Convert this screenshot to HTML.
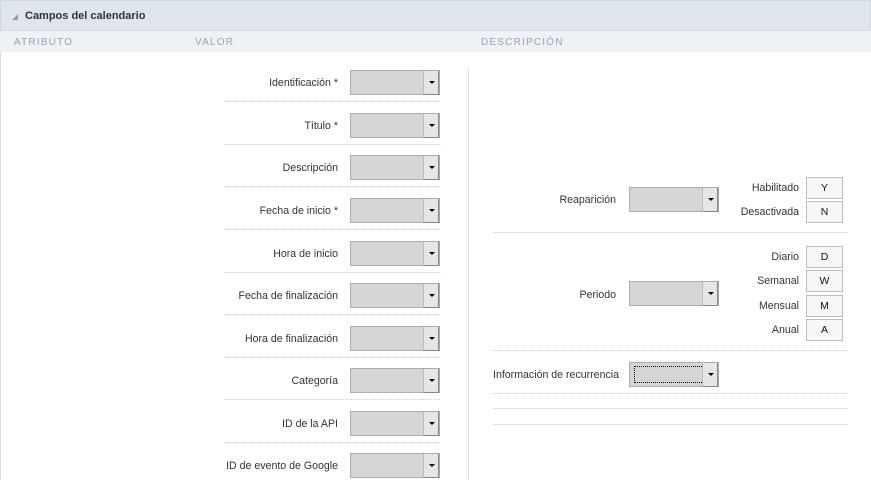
<!DOCTYPE html>
<html><head><meta charset="utf-8"><style>
*{margin:0;padding:0;box-sizing:border-box}
body{width:871px;height:480px;background:#fff;font-family:"Liberation Sans",Arial,sans-serif;font-size:10.6px;color:#333;position:relative;overflow:hidden}
.abs{position:absolute}
.hdr{left:0;top:0;width:871px;height:31px;background:#dfe5ec;border:1px solid #cfd6de;border-bottom:1px solid #d6dde5}
.hdr span{position:absolute;left:24px;top:9px;font-weight:bold;color:#333;font-size:11px}
.tri{left:11px;top:13px;width:0;height:0;border-left:6px solid transparent;border-bottom:6px solid #999}
.colh{left:0;top:31px;width:871px;height:21px;background:#eef2f5;color:#8fa3b8;font-size:10px;letter-spacing:1.2px}
.colh span{position:absolute;top:6px}
.lb{position:absolute;text-align:right;white-space:nowrap}
.sel{position:absolute;width:90px;height:25px;background:#d5d5d5;border:1px solid #a8adb3}
.sel:after{content:"";position:absolute;right:0;top:0;width:14px;height:23px;background:#e6e6e6;border-left:1px solid #bbb;border-right:1px solid #888;border-bottom:1px solid #888}
.sel:before{content:"";position:absolute;right:4px;top:10px;border-left:3px solid transparent;border-right:3px solid transparent;border-top:3px solid #000;z-index:2}
.sep{position:absolute;height:0;border-top:1px dotted #b8cfe0}
.box{position:absolute;left:806px;width:37px;height:22px;border:1px solid #bbb;background:#f7f7f7;text-align:center;line-height:20px;font-size:10.5px;color:#111}
.leftbd{left:0;top:52px;width:1px;height:428px;background:#ddd}
</style></head><body>
<div class="abs hdr"><div class="abs tri"></div><span>Campos del calendario</span></div>
<div class="abs colh"><span style="left:14px">ATRIBUTO</span><span style="left:195px">VALOR</span><span style="left:481px">DESCRIPCIÓN</span></div>
<div class="abs leftbd"></div>
<div class="abs" style="left:468px;top:68px;height:412px;border-left:1px dotted #b8cfe0"></div>

<div class="lb" style="right:533px;top:77px">Identificación *</div><div class="sel" style="left:350px;top:70px"></div><div class="sep" style="left:225px;width:215px;top:101px"></div>
<div class="lb" style="right:533px;top:120px">Título *</div><div class="sel" style="left:350px;top:113px"></div><div class="sep" style="left:225px;width:215px;top:144px"></div>
<div class="lb" style="right:533px;top:162px">Descripción</div><div class="sel" style="left:350px;top:155px"></div><div class="sep" style="left:225px;width:215px;top:186px"></div>
<div class="lb" style="right:533px;top:205px">Fecha de inicio *</div><div class="sel" style="left:350px;top:198px"></div><div class="sep" style="left:225px;width:215px;top:229px"></div>
<div class="lb" style="right:533px;top:248px">Hora de inicio</div><div class="sel" style="left:350px;top:241px"></div><div class="sep" style="left:225px;width:215px;top:272px"></div>
<div class="lb" style="right:533px;top:290px">Fecha de finalización</div><div class="sel" style="left:350px;top:283px"></div><div class="sep" style="left:225px;width:215px;top:314px"></div>
<div class="lb" style="right:533px;top:333px">Hora de finalización</div><div class="sel" style="left:350px;top:326px"></div><div class="sep" style="left:225px;width:215px;top:357px"></div>
<div class="lb" style="right:533px;top:375px">Categoría</div><div class="sel" style="left:350px;top:368px"></div><div class="sep" style="left:225px;width:215px;top:399px"></div>
<div class="lb" style="right:533px;top:418px">ID de la API</div><div class="sel" style="left:350px;top:411px"></div><div class="sep" style="left:225px;width:215px;top:442px"></div>
<div class="lb" style="right:533px;top:460px">ID de evento de Google</div><div class="sel" style="left:350px;top:453px"></div>

<div class="lb" style="right:255px;top:194px">Reaparición</div><div class="sel" style="left:629px;top:187px"></div>
<div class="lb" style="right:72px;top:182px">Habilitado</div><div class="box" style="top:177px">Y</div>
<div class="lb" style="right:72px;top:206px">Desactivada</div><div class="box" style="top:201px">N</div>
<div class="sep" style="left:493px;width:355px;top:232px"></div>
<div class="lb" style="right:255px;top:289px">Periodo</div><div class="sel" style="left:629px;top:281px"></div>
<div class="lb" style="right:72px;top:251px">Diario</div><div class="box" style="top:246px">D</div>
<div class="lb" style="right:72px;top:275px">Semanal</div><div class="box" style="top:270px">W</div>
<div class="lb" style="right:72px;top:300px">Mensual</div><div class="box" style="top:295px">M</div>
<div class="lb" style="right:72px;top:324px">Anual</div><div class="box" style="top:319px">A</div>
<div class="sep" style="left:493px;width:355px;top:350px"></div>
<div class="lb" style="left:493px;top:369px">Información de recurrencia</div><div class="sel" style="left:629px;top:362px"><div class="abs" style="left:4px;top:3px;width:70px;height:17px;border:1px dotted #000"></div></div>
<div class="sep" style="left:493px;width:355px;top:393px"></div>
<div class="sep" style="left:493px;width:355px;top:408px"></div>
<div class="sep" style="left:493px;width:355px;top:424px"></div>
</body></html>
